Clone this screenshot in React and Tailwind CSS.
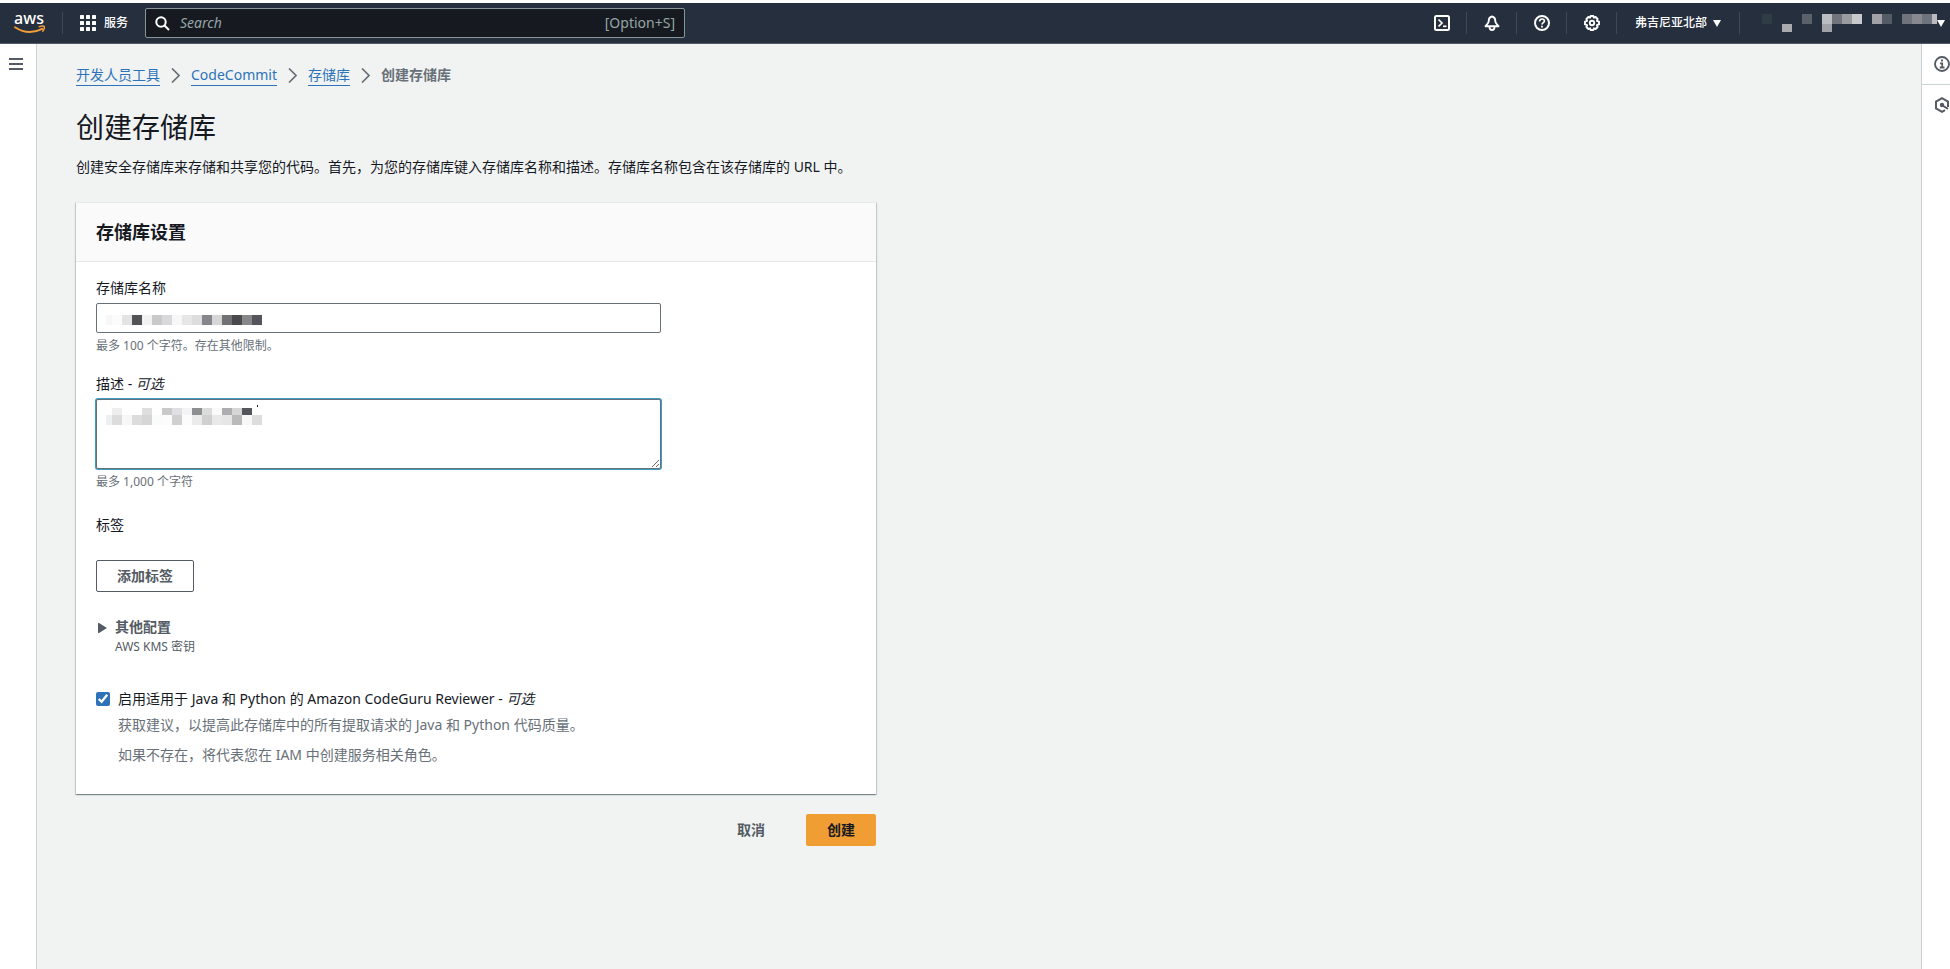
import React, { useState } from 'react';

const Caret = () => (
    <svg width="8" height="7" viewBox="0 0 8 7" fill="currentColor" aria-hidden="true">
        <path d="M0 0h8L4 7z" />
    </svg>
);

const AwsLogo = () => (
    <svg width="32" height="38" viewBox="0 -8 32 38" aria-label="aws">
        <text x="15" y="12" textAnchor="middle" fontFamily="Noto Sans, sans-serif" fontSize="16" fontWeight="500" fill="#fff">aws</text>
        <path d="M1 15.2c8.500 5.600 18.500 6 27.200 1.600" fill="none" stroke="#f29d38" strokeWidth="1.900" strokeLinecap="round" />
        <path d="M25.200 14.700c2-.7 4.200-.8 5-.3.400 1-.2 3.200-1.500 4.800" fill="none" stroke="#f29d38" strokeWidth="1.400" strokeLinecap="round" />
    </svg>
);

const GridIcon = () => (
    <svg width="16" height="16" viewBox="0 0 16 16" fill="currentColor" aria-hidden="true">
        {[0, 6, 12].map((y) => [0, 6, 12].map((x) => <rect key={`${x}-${y}`} x={x} y={y} width="4" height="4" rx=".6" />))}
    </svg>
);

const SearchIcon = () => (
    <svg width="15" height="15" viewBox="0 0 15 15" fill="none" stroke="currentColor" strokeWidth="2" aria-hidden="true">
        <circle cx="6" cy="6" r="4.700" />
        <path d="M9.500 9.500l4.500 4.500" />
    </svg>
);

const TerminalIcon = () => (
    <svg width="16" height="16" viewBox="0 0 16 16" fill="none" stroke="currentColor" strokeWidth="2" aria-hidden="true">
        <rect x="1" y="1" width="14" height="14" rx="1.500" />
        <path d="M4.500 4.500L8 8l-3.500 3.500" strokeWidth="1.700" />
        <path d="M9 11.300h3.500" strokeWidth="1.700" />
    </svg>
);

const BellIcon = () => (
    <svg width="16" height="16" viewBox="0 0 16 16" fill="none" stroke="currentColor" strokeWidth="2" strokeLinejoin="round" aria-hidden="true">
        <path d="M8 1.500C5.500 2 4.700 4 4.700 6.200 4.700 8 3 9.500 1.500 11.200h13C13 9.500 11.300 8 11.300 6.200 11.300 4 10.500 2 8 1.500z" strokeWidth="1.900" />
        <path d="M5.500 12c0 4 5 4 5 0" strokeWidth="1.800" />
    </svg>
);

const HelpIcon = () => (
    <svg width="16" height="16" viewBox="0 0 16 16" fill="none" stroke="currentColor" strokeWidth="2" aria-hidden="true">
        <circle cx="8" cy="8" r="7" />
        <path d="M5.600 6.400C5.600 3.300 10.400 3.300 10.400 6c0 1.700-2.400 1.600-2.400 3.600" strokeWidth="1.700" />
        <path d="M8 10.700v1.800" strokeWidth="1.800" />
    </svg>
);

const GearIcon = () => (
    <svg width="16" height="16" viewBox="0 0 16 16" fill="none" stroke="currentColor" strokeWidth="1.900" strokeLinejoin="round" aria-hidden="true">
        <path d="M6.600 1h2.800l.5 1.700 1.700-.7L13.600 4l-.7 1.800 2.100.8v2.800l-2.100.8.7 1.800-2 2-1.700-.7-.5 1.700H6.600l-.5-1.700-1.700.7-2-2 .7-1.800L1 9.400V6.600l2.100-.8L2.400 4l2-2 1.700.7z" />
        <circle cx="8" cy="8" r="2.200" />
    </svg>
);

const InfoIcon = () => (
    <svg width="16" height="16" viewBox="0 0 16 16" fill="none" stroke="currentColor" strokeWidth="1.900" aria-hidden="true">
        <circle cx="8" cy="8" r="7" />
        <path d="M8 3.500v2" strokeWidth="2" />
        <path d="M6 7.400h2.200v3.700M5.700 11.500h4.800" strokeWidth="1.800" />
    </svg>
);

const HexIcon = () => (
    <svg width="16" height="16" viewBox="0 0 16 16" fill="none" stroke="currentColor" strokeWidth="2" aria-hidden="true">
        <path d="M14 10V4.600L8 1.200 2 4.600v6.800l6 3.400 3-1.700" />
        <circle cx="8" cy="8" r="2.200" fill="currentColor" stroke="none" />
        <path d="M8.500 8.500l5.500 3.300" />
    </svg>
);

const ChevronIcon = () => (
    <svg width="9" height="15" viewBox="0 0 9 15" fill="none" stroke="#687078" strokeWidth="1.700" aria-hidden="true">
        <path d="M1 .5l7 7-7 7" />
    </svg>
);

// Masked text: [x, y, width, height, colour]
const Mosaic = ({ blocks, width, height, className }) => (
    <svg width={width} height={height} className={className} shapeRendering="crispEdges" aria-hidden="true">
        {blocks.map(([x, y, w, h, fill]) => <rect key={`${x}-${y}`} x={x} y={y} width={w} height={h} fill={fill} />)}
    </svg>
);

const accountBlocks = [
    [0, 0, 10, 10, '#2f3b45'], [20, 10, 10, 8, '#a9aaae'], [40, 0, 10, 10, '#5a616b'],
    [60, 0, 10, 10, '#bcbdc2'], [60, 10, 10, 8, '#a0a2a7'], [70, 0, 10, 10, '#70757d'],
    [80, 0, 10, 10, '#9a9b9f'], [90, 0, 10, 10, '#c8c9cd'], [110, 0, 10, 10, '#a0a2a8'],
    [120, 0, 10, 10, '#535b65'], [140, 0, 10, 10, '#6f747c'], [150, 0, 10, 10, '#86898f'],
    [160, 0, 10, 10, '#6f737b'], [170, 0, 6, 10, '#babbc0'],
];

const nameBlocks = [
    [0, 0, 6, 10, '#f7f7f7'], [6, 0, 10, 10, '#fcfcfc'], [16, 0, 10, 10, '#e4e4e5'], [26, 0, 10, 10, '#535355'],
    [36, 0, 10, 10, '#f2f2f2'], [46, 0, 10, 10, '#c9c9ca'], [56, 0, 10, 10, '#d9d9dc'], [66, 0, 10, 10, '#f7f7f7'],
    [76, 0, 10, 10, '#e6e6e7'], [86, 0, 10, 10, '#dddddd'], [96, 0, 10, 10, '#85868b'], [106, 0, 10, 10, '#d6d6d7'],
    [116, 0, 10, 10, '#717274'], [126, 0, 10, 10, '#4a4a4d'], [136, 0, 10, 10, '#87878a'], [146, 0, 10, 10, '#54555c'],
];

const descriptionBlocks = [
    [6, 3, 10, 7, '#ededed'], [36, 3, 10, 7, '#dedede'], [56, 3, 10, 7, '#c9c9ca'], [66, 3, 10, 7, '#dfe0e3'],
    [76, 3, 10, 7, '#f4f4f4'], [86, 3, 10, 7, '#8e8f92'], [96, 3, 10, 7, '#dcdcdc'], [106, 3, 10, 7, '#fafafa'],
    [116, 3, 10, 7, '#adadaf'], [126, 3, 10, 7, '#d6d6d6'], [136, 3, 10, 7, '#55555c'], [151, 0, 1, 2, '#16191f'],
    [0, 10, 6, 10, '#edf0f0'], [6, 10, 10, 10, '#dcdcdc'], [16, 10, 10, 10, '#f7f7f7'], [26, 10, 10, 10, '#dcdcdc'],
    [36, 10, 10, 10, '#d6d6d6'], [46, 10, 10, 10, '#fafcfc'], [56, 10, 10, 10, '#fcfcfc'], [66, 10, 10, 10, '#d0d0d0'],
    [76, 10, 10, 10, '#fcfcfc'], [86, 10, 10, 10, '#ebebeb'], [96, 10, 10, 10, '#d0d0d0'], [106, 10, 10, 10, '#e9e9e9'],
    [116, 10, 10, 10, '#e6e6e6'], [126, 10, 10, 10, '#bababa'], [136, 10, 10, 10, '#f8f8f8'], [146, 10, 10, 10, '#dddddd'],
];

const Divider = () => <span className="h-[22px] w-px bg-[#414750]" />;

const NavButton = ({ label, children }) => (
    <>
        <button type="button" aria-label={label} className="flex h-full w-[49px] items-center justify-center">{children}</button>
        <Divider />
    </>
);

const TopNav = () => (
    <header className="mt-[3px] flex h-[41px] items-center border-b border-[#545b64] bg-[#262f3e] text-white">
        <a href="#home" className="ml-3.5 mr-4"><AwsLogo /></a>
        <Divider />
        <button type="button" className="ml-[17px] mr-[17px] flex items-center gap-2 text-xs font-medium"><GridIcon />服务</button>
        <label className="flex h-[30px] w-[540px] items-center rounded-xs border border-[#879596] bg-[#161a20] px-[9px]">
            <SearchIcon />
            <input type="text" placeholder="Search" aria-label="Search" className="ml-2.5 min-w-0 flex-1 bg-transparent text-sm outline-none placeholder:italic placeholder:text-[#95a5a6]" />
            <span className="text-sm text-[#95a5a6]">[Option+S]</span>
        </label>
        <nav className="ml-auto flex h-full items-center">
            <NavButton label="CloudShell"><TerminalIcon /></NavButton>
            <NavButton label="通知"><BellIcon /></NavButton>
            <NavButton label="支持"><HelpIcon /></NavButton>
            <NavButton label="设置"><GearIcon /></NavButton>
            <button type="button" className="flex h-full w-[122px] items-center justify-center gap-1.5 text-xs font-medium">弗吉尼亚北部<Caret /></button>
            <Divider />
            <button type="button" aria-label="账户" className="flex h-full w-[210px] items-center pl-[22px]">
                <Mosaic blocks={accountBlocks} width={175} height={18} />
                <Caret />
            </button>
        </nav>
    </header>
);

const Breadcrumbs = () => (
    <nav className="flex items-center gap-[11px] text-sm leading-5">
        {['开发人员工具', 'CodeCommit', '存储库'].map((item) => (
            <React.Fragment key={item}>
                <a href={`#${item}`} className="border-b border-[#2e73b8] text-[#2e73b8]">{item}</a>
                <ChevronIcon />
            </React.Fragment>
        ))}
        <span className="border-b border-transparent font-bold text-[#687078]">创建存储库</span>
    </nav>
);

const App = () => {
    const [reviewer, setReviewer] = useState(true);

    return (
        <div className="flex min-h-screen flex-col bg-white font-['Noto_Sans','Noto_Sans_CJK_SC',sans-serif] text-sm leading-5 text-[#16191f]">
            <TopNav />
            <div className="flex flex-1">
                <aside className="w-[37px] shrink-0 border-r border-[#ccd0d2] pl-[9px] pt-3.5">
                    <button type="button" aria-label="打开导航" className="block text-[#545b64]">
                        <svg width="14" height="12" viewBox="0 0 14 12" fill="currentColor"><path d="M0 0h14v2H0zM0 5h14v2H0zM0 10h14v2H0z" /></svg>
                    </button>
                </aside>

                <main className="min-w-0 flex-1 bg-[#f1f3f3] px-[39px] pt-[21px]">
                    <Breadcrumbs />
                    <h1 className="mt-[21px] text-[28px] leading-10">创建存储库</h1>
                    <p className="mt-2.5">创建安全存储库来存储和共享您的代码。首先，为您的存储库键入存储库名称和描述。存储库名称包含在该存储库的 URL 中。</p>

                    <form className="mt-[25px] max-w-[800px]" onSubmit={(e) => e.preventDefault()}>
                        <section className="border-t border-[#e6e9e9] bg-white shadow-[0_1px_1px_0_rgba(0,28,36,0.3),1px_1px_1px_0_rgba(0,28,36,0.15),-1px_1px_1px_0_rgba(0,28,36,0.15)]">
                            <h2 className="border-b border-[#e6e9e9] bg-[#fafafa] px-5 py-[17px] text-lg leading-6 font-bold">存储库设置</h2>
                            <div className="px-5 pb-[29px] pt-4">
                                <label htmlFor="name" className="block">存储库名称</label>
                                <div className="relative mt-[5px] w-[565px] max-w-full">
                                    <input id="name" type="text" className="block h-[30px] w-full rounded-xs border border-[#687078] bg-white px-2.5 outline-none" />
                                    <Mosaic blocks={nameBlocks} width={156} height={10} className="pointer-events-none absolute left-2.5 top-3" />
                                </div>
                                <p className="mt-[5px] text-xs leading-4 text-[#687078]">最多 100 个字符。存在其他限制。</p>

                                <label htmlFor="description" className="mt-5 block">描述 - <i>可选</i></label>
                                <div className="relative mt-[5px] w-[565px] max-w-full">
                                    <textarea id="description" className="block h-[70px] w-full resize rounded-xs border border-[#687078] bg-white px-2.5 outline-none ring-1 ring-[#3d9dc9]" />
                                    <Mosaic blocks={descriptionBlocks} width={156} height={20} className="pointer-events-none absolute left-2.5 top-1.5" />
                                </div>
                                <p className="mt-[5px] text-xs leading-4 text-[#687078]">最多 1,000 个字符</p>

                                <h3 className="mt-[25px]">标签</h3>
                                <button type="button" className="mt-[25px] h-8 rounded-xs border border-[#545b64] px-5 font-bold text-[#545b64]">添加标签</button>

                                <button type="button" className="mt-[25px] flex items-start text-left text-[#545b64]">
                                    <svg width="10" height="10" viewBox="0 0 10 10" fill="currentColor" className="ml-0.5 mr-[7px] mt-1.5"><path d="M0 0h1l8 5-8 5H0z" /></svg>
                                    <span>
                                        <span className="block font-bold">其他配置</span>
                                        <span className="block text-xs leading-5">AWS KMS 密钥</span>
                                    </span>
                                </button>

                                <div className="mt-8 flex gap-2">
                                    <input id="reviewer" type="checkbox" checked={reviewer} onChange={(e) => setReviewer(e.target.checked)} className="mt-[3px] size-3.5 shrink-0 accent-[#2e73b8]" />
                                    <div>
                                        <label htmlFor="reviewer">启用适用于 Java 和 Python 的 Amazon CodeGuru Reviewer - <i>可选</i></label>
                                        <p className="mt-1.5 text-[#687078]">获取建议，以提高此存储库中的所有提取请求的 Java 和 Python 代码质量。</p>
                                        <p className="mt-2.5 text-[#687078]">如果不存在，将代表您在 IAM 中创建服务相关角色。</p>
                                    </div>
                                </div>
                            </div>
                        </section>

                        <div className="mt-5 flex justify-end gap-5 font-bold">
                            <button type="button" className="h-8 px-[21px] text-[#545b64]">取消</button>
                            <button type="submit" className="h-8 rounded-xs bg-[#f09d34] px-[21px]">创建</button>
                        </div>
                    </form>
                </main>

                <aside className="flex w-[29px] shrink-0 flex-col border-l border-[#ccd0d2] text-[#545b64]">
                    <button type="button" aria-label="信息" className="flex h-[41px] items-center justify-end border-b border-[#ccd5d5]"><InfoIcon /></button>
                    <button type="button" aria-label="教程" className="flex h-10 items-center justify-end"><HexIcon /></button>
                </aside>
            </div>
        </div>
    );
};

export default App;
